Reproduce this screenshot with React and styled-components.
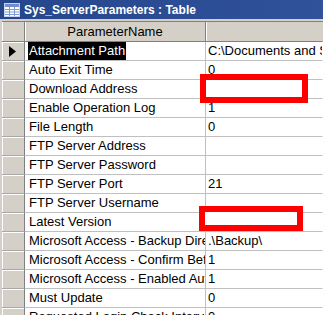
import React from 'react';
import styled, { createGlobalStyle } from 'styled-components';

const Global = createGlobalStyle`
  html, body { margin: 0; padding: 0; background: #d4d0c8; overflow: hidden; }
  body { font-family: "Liberation Sans", Arial, sans-serif; }
  * { box-sizing: border-box; }
`;

const Window = styled.div`
  position: relative;
  width: 323px;
  height: 315px;
  overflow: hidden;
  background: #d4d0c8;
  display: flex;
  flex-direction: column;
`;

const TitleBar = styled.div`
  flex: none;
  height: 19px;
  display: flex;
  align-items: center;
  gap: 4px;
  padding-left: 4px;
  background: linear-gradient(to right, #26468c, #30529b);
  color: #fff;
  font-weight: bold;
  font-size: 12px;
  white-space: nowrap;
`;

const FrameStrip = styled.div`
  flex: none;
  height: 2px;
  background: #d4d0c8;
`;

const Grid = styled.div`
  flex: 1;
  margin-left: 2px;
  border-top: 1px solid #808080;
  background: #fff;
  display: grid;
  grid-template-columns: 23px 181px 1fr;
  grid-auto-rows: 19px;
  grid-template-rows: 20px;
  font-size: 13px;
  color: #000;
  overflow: hidden;
`;

const HeadCell = styled.div`
  background: #d4d0c8;
  border-right: 1px solid ${p => (p.$last ? '#d4d0c8' : '#808080')};
  border-bottom: 1px solid #808080;
  box-shadow: inset 1px 0 0 #fff;
  display: flex;
  align-items: center;
  justify-content: center;
  white-space: nowrap;
  line-height: 19px;
`;

const Selector = styled.div`
  background: #d4d0c8;
  border-right: 1px solid #808080;
  border-bottom: 1px solid #a8a8a8;
  box-shadow: inset 1px 1px 0 #fff;
  display: flex;
  align-items: center;
  padding-left: 7px;
`;

const Cell = styled.div`
  border-right: 1px solid ${p => (p.$last ? 'transparent' : '#c0c0c0')};
  border-bottom: 1px solid #c0c0c0;
  padding-left: ${p => p.$pad}px;
  line-height: 18px;
  white-space: nowrap;
  overflow: hidden;
`;

const Selected = styled.span`
  display: inline-block;
  background: #000;
  color: #fff;
  margin-left: -1px;
  padding: 0 1px;
  line-height: 18px;
`;

const Redact = styled.div`
  position: absolute;
  border: 6px solid #f00;
  background: #fff;
`;

const TableIcon = () => (
  <svg width="16" height="14" viewBox="0 0 16 14">
    <rect x="0.5" y="0.5" width="15" height="13" fill="#fff" stroke="#c8d4ec" />
    <rect x="1" y="1" width="14" height="3" fill="#6f8fd0" />
    <path d="M1 6.5h14M1 9h14M1 11.5h14M5.5 4v9M10.5 4v9" stroke="#7f9bd6" strokeWidth="1" />
  </svg>
);

const Arrow = () => (
  <svg width="7" height="11" viewBox="0 0 7 11">
    <path d="M0 0L7 5.5L0 11Z" fill="#000" />
  </svg>
);

const rows = [
  ['Attachment Path', 'C:\\Documents and Settings\\'],
  ['Auto Exit Time', '0'],
  ['Download Address', ''],
  ['Enable Operation Log', '1'],
  ['File Length', '0'],
  ['FTP Server Address', ''],
  ['FTP Server Password', ''],
  ['FTP Server Port', '21'],
  ['FTP Server Username', ''],
  ['Latest Version', ''],
  ['Microsoft Access - Backup Directory', '.\\Backup\\'],
  ['Microsoft Access - Confirm Before Exit', '1'],
  ['Microsoft Access - Enabled Auto Backup', '1'],
  ['Must Update', '0'],
  ['Requested Login Check Interval', '0'],
];

export default function App() {
  return (
    <>
      <Global />
      <Window>
        <TitleBar>
          <TableIcon />
          <span>Sys_ServerParameters : Table</span>
        </TitleBar>
        <FrameStrip />
        <Grid>
          <HeadCell />
          <HeadCell>ParameterName</HeadCell>
          <HeadCell $last />
          {rows.map(([name, value], i) => (
            <React.Fragment key={name}>
              <Selector>{i === 0 && <Arrow />}</Selector>
              <Cell $pad={4}>{i === 0 ? <Selected>{name}</Selected> : name}</Cell>
              <Cell $pad={2} $last>{value}</Cell>
            </React.Fragment>
          ))}
        </Grid>
        <Redact style={{ left: 200, top: 74, width: 108, height: 29 }} />
        <Redact style={{ left: 199, top: 206, width: 104, height: 25 }} />
      </Window>
    </>
  );
}
